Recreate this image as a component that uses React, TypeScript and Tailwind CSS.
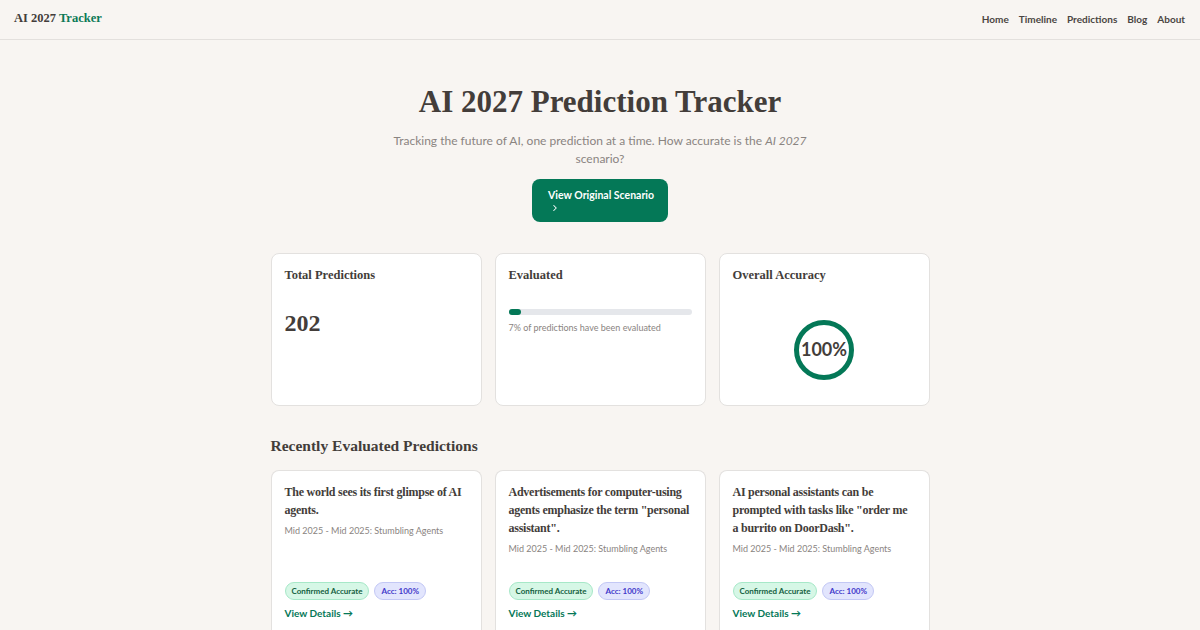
import React from "react";
import { ChevronRight } from "lucide-react";

const serif = "font-['Liberation_Serif',_'Times_New_Roman',serif]";

const predictions = [
  { title: "The world sees its first glimpse of AI agents.", period: "Mid 2025 - Mid 2025: Stumbling Agents" },
  { title: 'Advertisements for computer-using agents emphasize the term "personal assistant".', period: "Mid 2025 - Mid 2025: Stumbling Agents" },
  { title: 'AI personal assistants can be prompted with tasks like "order me a burrito on DoorDash".', period: "Mid 2025 - Mid 2025: Stumbling Agents" },
];

function StatCard({ title, children }: { title: string; children: React.ReactNode }) {
  return (
    <div className="flex h-[153px] flex-col rounded-lg border border-[#e3e1df] bg-white px-[13px] pt-[12px]">
      <h3 className={`${serif} text-[12.5px] font-bold text-[#433d3a]`}>{title}</h3>
      {children}
    </div>
  );
}

export default function App() {
  return (
    <div className="min-h-[630px] bg-[#f8f5f2] font-['Lato',sans-serif] text-[#433d3a]">
      <header className="flex h-10 items-center justify-between border-b border-[#e3e0dd] px-[14px]">
        <div className={`${serif} -mt-[2px] text-[12.5px] font-bold`}>
          AI 2027 <span className="text-[#0b7a56]">Tracker</span>
        </div>
        <nav className="flex gap-[10px] pr-[1px] text-[10px] font-bold text-[#4a4542]">
          <a>Home</a>
          <a>Timeline</a>
          <a>Predictions</a>
          <a>Blog</a>
          <a>About</a>
        </nav>
      </header>

      <main className="mx-auto w-[659px]">
        <section className="flex flex-col items-center pt-[43px]">
          <h1 className={`${serif} text-[31px] font-bold leading-[38px] text-[#433d3a]`}>AI 2027 Prediction Tracker</h1>
          <p className="mt-[11px] w-[430px] text-center text-[12px] leading-[18px] text-[#8a8481]">
            Tracking the future of AI, one prediction at a time. How accurate is the <em>AI 2027</em> scenario?
          </p>
          <button className="mt-[11px] flex h-[43px] w-[136px] flex-col items-start justify-center rounded-lg bg-[#047857] px-4 text-left text-[10.5px] font-bold leading-[14px] text-white">
            <span className="whitespace-nowrap">View Original Scenario</span>
            <ChevronRight className="mt-[1px] ml-[2px] h-[10px] w-[10px]" strokeWidth={2.5} />
          </button>
        </section>

        <section className="mt-[31px] grid grid-cols-3 gap-[13px]">
          <StatCard title="Total Predictions">
            <div className={`${serif} mt-[20px] text-[24px] font-bold`}>202</div>
          </StatCard>
          <StatCard title="Evaluated">
            <div className="mt-[24px] h-[6px] w-full rounded-full bg-[#e5e7eb]">
              <div className="h-full rounded-full bg-[#047857]" style={{ width: "7%" }} />
            </div>
            <p className="mt-[6px] text-[9px] text-[#8a8481]">7% of predictions have been evaluated</p>
          </StatCard>
          <StatCard title="Overall Accuracy">
            <div className="flex flex-1 items-center justify-center pt-[10px]">
              <div className="flex h-[60px] w-[60px] items-center justify-center rounded-full border-[5px] border-[#047857] text-[18px] font-bold text-[#433d3a]">
                100%
              </div>
            </div>
          </StatCard>
        </section>

        <h2 className={`${serif} mt-[28px] text-[15.5px] font-bold`}>Recently Evaluated Predictions</h2>

        <section className="mt-[13px] grid grid-cols-3 gap-[13px]">
          {predictions.map((p) => (
            <div key={p.title} className="flex h-[170px] flex-col rounded-t-lg border border-b-0 border-[#e3e1df] bg-white px-[13px] pt-[12px]">
              <h3 className={`${serif} text-[12px] font-bold leading-[18px] tracking-[-0.25px]`}>{p.title}</h3>
              <p className="mt-[5px] text-[9px] text-[#8a8481]">{p.period}</p>
              <div className="mt-auto flex gap-[5px]">
                <span className="rounded-full border border-[#a7e8c8] bg-[#d6f7e6] px-[6px] py-[2px] text-[8px] font-bold text-[#14613f]">Confirmed Accurate</span>
                <span className="rounded-full border border-[#c3c8f5] bg-[#e2e5fd] px-[6px] py-[2px] text-[8px] font-bold text-[#4338ca]">Acc: 100%</span>
              </div>
              <a className="mt-[6px] mb-[19px] text-[10px] font-bold text-[#047857]">View Details →</a>
            </div>
          ))}
        </section>
      </main>
    </div>
  );
}
